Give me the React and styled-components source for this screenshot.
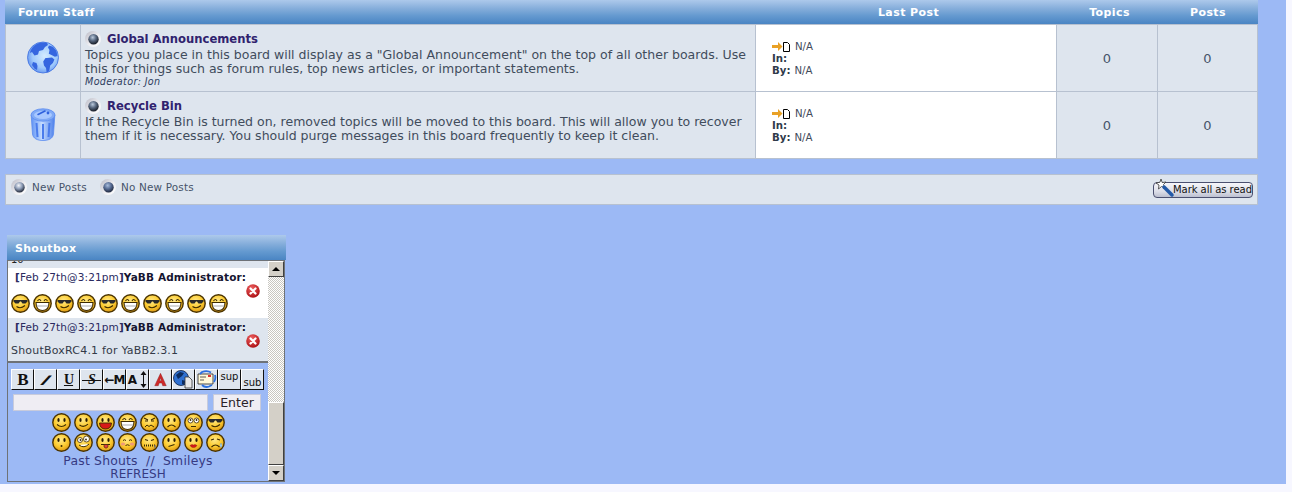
import React from "react";
import styled, { createGlobalStyle } from "styled-components";

const Global = createGlobalStyle`
  html, body { margin: 0; padding: 0; background: #f7f7ff; }
  body { font-family: "DejaVu Sans", Verdana, sans-serif; color: #3f4a5a; overflow: hidden; }
`;

const Page = styled.div`
  width: 1286px; height: 484px; background: #9cb9f5; overflow: hidden;
  display: flex; flex-direction: column; align-items: flex-start; padding-left: 5px; box-sizing: border-box;
`;
const HEADER_GRADIENT = "linear-gradient(#adc9eb 0%, #86aedb 35%, #659ad0 65%, #4a85c3 100%)";
const COLS = "75px 675px 301px 101px 1fr";
const Board = styled.section`width: 1253px; flex: none;`;
const HeadRow = styled.div`
  display: grid; grid-template-columns: ${COLS}; height: 24px; align-items: center;
  background: ${HEADER_GRADIENT};
  color: #fff; font-weight: bold; font-size: 11px;
`;
const HeadTitle = styled.div`grid-column: 1 / span 2; padding-left: 13px; letter-spacing: .3px;`;
const HeadCell = styled.div`text-align: center; padding-left: ${p => p.$shift || 0}px; letter-spacing: .4px;`;
const Row = styled.div`
  display: grid; grid-template-columns: ${COLS}; height: ${p => p.$h}px;
  border: 1px solid #b7c1d0; border-top: ${p => p.$first ? "1px solid #b7c1d0" : "0"}; box-sizing: border-box;
`;
const Cell = styled.div`
  background: ${p => p.$white ? "#fff" : "#dee5ee"};
  border-right: ${p => p.$last ? "0" : "1px solid #b7c1d0"};
  box-sizing: border-box; min-width: 0;
`;
const IconCell = styled(Cell)`display: flex; align-items: center; justify-content: center; padding-bottom: 1px;`;
const InfoCell = styled(Cell)`padding: 5px 0 0 4px;`;
const TitleLine = styled.div`display: flex; align-items: center; gap: 6px; height: 18px; padding-bottom: 1px; box-sizing: border-box;`;
const BoardTitle = styled.a`font-size: 11.6px; font-weight: bold; color: #30226e; white-space: nowrap;`;
const Desc = styled.div`font-size: 12.52px; line-height: 14px; white-space: nowrap; color: #414c5c;`;
const Mod = styled.div`font-size: 9.6px; font-style: italic; line-height: 12px; color: #2e3e5e; letter-spacing: .35px;`;
const LastCell = styled(Cell)`padding: 16px 0 0 16px; font-size: 10.2px; line-height: 12px;`;
const LastLine = styled.div`display: flex; align-items: center; gap: 4px; height: 12px;`;
const Strong = styled.b`color: #2f3a4a;`;
const CountCell = styled(Cell)`display: flex; align-items: center; justify-content: center; font-size: 13px; color: #46546a;`;

const Legend = styled.div`
  width: 1253px; height: 31px; flex: none; margin-top: 15px; box-sizing: border-box;
  background: #dee5ee; border: 1px solid #b7c1d0;
  display: flex; align-items: center; padding: 0 4px 0 5px; font-size: 10.4px; color: #46546a; letter-spacing: .2px;
`;
const LegendItem = styled.div`display: flex; align-items: center; gap: 5px; margin: 0 13px 6px 0;`;
const MarkButton = styled.button`
  position: relative; margin-left: auto; width: 100px; height: 16px; padding: 0 0 0 19px; box-sizing: border-box;
  border: 1px solid #4b5070; border-radius: 4px; background: linear-gradient(#f6f6fa, #dcdee8 60%, #bcc0d0);
  font: 10px/13px "DejaVu Sans", sans-serif; color: #111; white-space: nowrap; text-align: left; letter-spacing: -.05px;
`;
const Wand = styled.svg`position: absolute; left: 2px; top: -4px;`;

const Shout = styled.section`width: 279px; flex: none; margin: 30px 0 0 2px;`;
const ShoutHead = styled.div`
  height: 25px; box-sizing: border-box; background: ${HEADER_GRADIENT}; color: #fff; font-weight: bold; font-size: 11px;
  display: flex; align-items: center; padding: 1px 0 0 8px; letter-spacing: .3px;
`;
const Frame = styled.div`
  width: 278px; height: 222px; box-sizing: border-box; border: 1px solid #6e7277;
  display: grid; grid-template-columns: 260px 16px; grid-template-rows: 220px;
`;
const Main = styled.div`display: flex; flex-direction: column; min-width: 0; min-height: 0;`;
const Feed = styled.div`border-bottom: 2px solid #6e7277; background: #dee5ee;`;
const Clip = styled.div`
  height: 7px; overflow: hidden; display: flex; align-items: flex-end; padding: 0 0 2px 3px; box-sizing: border-box;
  font-size: 10px; line-height: 12px; color: #222;
`;
const Post = styled.div`
  position: relative; height: ${p => p.$h}px; box-sizing: border-box; padding: 3px 0 0 3px;
  background: ${p => p.$white ? "#fff" : "#dee5ee"}; font-size: 10.5px; line-height: 12px; color: #2a2a60;
`;
const PostHead = styled.div`padding-left: 4px; white-space: nowrap; letter-spacing: .13px;`;
const Name = styled.b`color: #151530;`;
const Delete = styled.svg`position: absolute; right: 8px; top: 16px;`;
const PostSmileys = styled.div`display: flex; gap: 3px; margin-top: 11px;`;
const PostText = styled.div`margin-top: 12px; color: #333a48; white-space: nowrap; font-size: 11px; letter-spacing: .2px;`;

const Form = styled.form`flex: 1; background: #9cb9f5; padding: 6px 3px 0; display: flex; flex-direction: column; margin: 0; min-height: 0;`;
const Toolbar = styled.div`display: flex; height: 21px; flex: none;`;
const Tool = styled.div`
  width: 23px; height: 21px; box-sizing: border-box; flex: none; background: #dee5ee; overflow: hidden;
  border-top: 1px solid #fff; border-left: 1px solid #fff; border-right: 1px solid #111; border-bottom: 1px solid #111;
  display: flex; align-items: ${p => p.$align || "center"}; justify-content: center; color: #111;
  font: bold 12px/1 "DejaVu Sans", sans-serif; letter-spacing: -1px;
`;
const SerifB = styled.span`font: bold 17px/1 "Liberation Serif", serif;`;
const SlantI = styled.span`font: bold 14px/1 "Liberation Sans", sans-serif; display: block; transform: skewX(-42deg) scaleX(1.5);`;
const UnderU = styled.span`font: bold 14px/1 "Liberation Serif", serif; text-decoration: underline;`;
const StrikeS = styled.span`font: italic bold 14px/1 "Liberation Serif", serif; position: relative; &::after { content: ""; position: absolute; left: -6px; right: -6px; top: 7px; height: 1px; background: #111; }`;
const Small = styled.span`font: 10px/1 "DejaVu Sans", sans-serif; letter-spacing: 0; padding: ${p => p.$pad};`;
const Entry = styled.div`display: flex; gap: 5px; padding: 4px 0 0 2px; flex: none;`;
const Input = styled.input`
  width: 195px; height: 17px; box-sizing: border-box; border: 1px solid #c8cbdc; background: #efedf3; padding: 0;
`;
const Enter = styled.button`
  width: 48px; height: 17px; box-sizing: border-box; border: 1px solid #c8cbdc; background: #efedf3; padding: 0;
  font: 12.5px/15px "DejaVu Sans", sans-serif; color: #2a2228;
`;
const SmileRow = styled.div`display: flex; justify-content: center; gap: 3px; height: 19px; margin-top: ${p => p.$mt}px; flex: none;`;
const Links = styled.div`
  text-align: center; font-size: ${p => p.$size}px; line-height: ${p => p.$lh}px; color: #363a82; white-space: pre; flex: none;
  margin-top: ${p => p.$mt || 0}px; letter-spacing: ${p => p.$ls || 0}px;
`;

const Bar = styled.div`display: flex; flex-direction: column; background-color: #fff; background-image: conic-gradient(#c9c7c1 25%, transparent 0 50%, #c9c7c1 0 75%, transparent 0); background-size: 2px 2px;`;
const Arrow = styled.div`
  width: 16px; height: 16px; box-sizing: border-box; flex: none; background: #d4d0c8;
  border: 1px solid; border-color: #fff #404040 #404040 #fff; display: flex; align-items: center; justify-content: center;
`;
const Tri = styled.span`
  width: 0; height: 0; border-left: 4px solid transparent; border-right: 4px solid transparent;
  ${p => p.$down ? "border-top: 4px solid #000;" : "border-bottom: 4px solid #000;"}
`;
const Thumb = styled.div`
  height: 63px; margin-top: auto; box-sizing: border-box; background: #d4d0c8;
  border: 1px solid; border-color: #fff #404040 #404040 #fff;
`;
const DefsSvg = styled.svg`position: absolute; width: 0; height: 0;`;

const Defs = () => (
  <DefsSvg aria-hidden="true">
    <defs>
      <radialGradient id="face" cx="45%" cy="35%" r="70%"><stop offset="0" stopColor="#ffe98a"/><stop offset=".55" stopColor="#fccb30"/><stop offset="1" stopColor="#d78f10"/></radialGradient>
      <linearGradient id="led" x1="0" y1="0" x2="1" y2="1"><stop offset="0" stopColor="#b9b9c4"/><stop offset=".55" stopColor="#eeeef2"/><stop offset="1" stopColor="#fff"/></linearGradient>
      <radialGradient id="ball" cx="42%" cy="32%" r="70%"><stop offset="0" stopColor="#bccadc"/><stop offset=".45" stopColor="#5c6c84"/><stop offset="1" stopColor="#12161f"/></radialGradient>
      <radialGradient id="ballNew" cx="42%" cy="32%" r="70%"><stop offset="0" stopColor="#f6f8fc"/><stop offset=".5" stopColor="#8a99b4"/><stop offset="1" stopColor="#1c2230"/></radialGradient>
      <radialGradient id="ballOld" cx="42%" cy="32%" r="70%"><stop offset="0" stopColor="#a8bcdc"/><stop offset=".5" stopColor="#566a92"/><stop offset="1" stopColor="#1c2438"/></radialGradient>
      <radialGradient id="sea" cx="55%" cy="45%" r="60%"><stop offset="0" stopColor="#d3ebff"/><stop offset=".65" stopColor="#a0cafc"/><stop offset="1" stopColor="#5f90ee"/></radialGradient>
      <linearGradient id="bin" x1="0" x2="1" y1="0" y2="0"><stop offset="0" stopColor="#5f92f4"/><stop offset=".45" stopColor="#c5dcff"/><stop offset="1" stopColor="#4a7eea"/></linearGradient>
      <radialGradient id="red" cx="40%" cy="30%" r="75%"><stop offset="0" stopColor="#f06060"/><stop offset="1" stopColor="#a80c10"/></radialGradient>
    </defs>
  </DefsSvg>
);

const Led = ({ fill = "ball" }) => (
  <svg width="16" height="16" viewBox="0 0 16 16" style={{ flex: "none" }}>
    <circle cx="8" cy="8" r="8" fill="url(#led)"/>
    <circle cx="8.500" cy="8.300" r="5.200" fill={`url(#${fill})`}/>
  </svg>
);

const Globe = () => (
  <svg width="32" height="33" viewBox="0 0 32 33">
    <circle cx="16" cy="16.500" r="15.500" fill="url(#sea)" stroke="#3f70e0" strokeWidth=".8"/>
    <path fill="#3566e0" d="M9 3.500c3-2 8-2.500 11-1.500l1 2-3 2-2 3-4 1-1 3.500-3.500 1L5 11 2.800 12C3.500 8.500 6 5 9 3.500z"/>
    <path fill="#3566e0" d="M20 17l5-.6 2.400 2-1.500 3.600-2.700 2.500-1 5.500-2.500 1.800-.7-4.800-2-2.600-.8-3.900 2.300-3.500z"/>
    <path fill="#3566e0" d="M22 4.500l4 1.200 3.500 4.300.9 5-2.500.8-2.400-1.300-3.700-1.700.7-3.800-1.500-2.500z"/>
    <path fill="#3566e0" d="M6 21l3.500 1 1 3-.5 4-2.500-1.500L5 24z"/>
  </svg>
);

const Bin = () => (
  <svg width="26" height="33" viewBox="0 0 26 33">
    <path fill="url(#bin)" stroke="#5a8cf0" strokeWidth=".8" d="M1.200 7l1.300 19c.5 4.500 5 6.500 10.500 6.500S23 30.500 23.500 26l1.300-19z"/>
    <ellipse cx="13" cy="7" rx="12" ry="6.200" fill="#80aaf6" stroke="#5a8cf0" strokeWidth=".8"/>
    <ellipse cx="13" cy="7" rx="9" ry="4" fill="#a8c8ff"/>
    <path stroke="#2f62de" strokeWidth="1.600" strokeLinecap="round" d="M8 6.500l7-3.500"/>
    <circle cx="18" cy="5" r="1.400" fill="#2f62de"/>
    <path stroke="#4a7cec" strokeWidth="2" fill="none" d="M6.500 15l1 14M13 16v15M19.500 15l-1 14"/>
  </svg>
);

const PostIcon = () => (
  <svg width="19" height="10" viewBox="0 0 19 10" style={{ flex: "none" }}>
    <path fill="#e9a126" d="M0 3h6V0l4.500 4.500L6 9V6H0z"/>
    <path fill="#fff" stroke="#000" d="M11.500.5h4l2 2v7h-6z"/>
  </svg>
);

const DeleteIcon = () => (
  <Delete width="14" height="14" viewBox="0 0 14 14">
    <circle cx="7" cy="7" r="6.800" fill="url(#red)"/>
    <path stroke="#fff" strokeWidth="2.200" strokeLinecap="round" d="M4.500 4.500l5 5M9.500 4.500l-5 5"/>
  </Delete>
);

const eyes = <g fill="#2a1c00"><ellipse cx="6.500" cy="7" rx="1.100" ry="1.900"/><ellipse cx="12.500" cy="7" rx="1.100" ry="1.900"/></g>;
const L = "#3d2a00";
const faces = {
  smile: <>{eyes}<path d="M5 11.500q4.500 4 9 0" fill="none" stroke={L} strokeWidth="1.100"/></>,
  wink: <>{eyes}<path d="M5.500 12q4 3 8.500-.8" fill="none" stroke={L} strokeWidth="1.100"/></>,
  grin: <>{eyes}<path d="M3.500 10h12q-.5 6-6 6t-6-6z" fill="#d81818" stroke={L} strokeWidth=".9"/></>,
  laugh: <><path d="M4.500 7q2-3 3.500 0M11 7q1.500-3 3.500 0" fill="none" stroke={L} strokeWidth="1.100"/><path d="M3 8.500h13q0 8-6.500 8t-6.500-8z" fill="#fff" stroke={L} strokeWidth="1.100"/><path d="M3.500 12h12" stroke="#888" strokeWidth=".7"/></>,
  angry: <><path d="M4 5l4 2M15 5l-4 2M5 8h3M11 8h3" stroke={L} strokeWidth="1.200"/><path d="M5 14l2-2 2 1.500 2-1.500 3 2" fill="none" stroke={L} strokeWidth="1"/></>,
  sad: <>{eyes}<path d="M5.500 14q4-4 8 0" fill="none" stroke={L} strokeWidth="1.100"/></>,
  roll: <><circle cx="6.500" cy="7.500" r="2.500" fill="#fff" stroke={L} strokeWidth=".8"/><circle cx="12.500" cy="7.500" r="2.500" fill="#fff" stroke={L} strokeWidth=".8"/><circle cx="6.500" cy="7" r=".9" fill={L}/><circle cx="12.500" cy="7" r=".9" fill={L}/><path d="M7 13.500h5" stroke={L} strokeWidth="1"/></>,
  cool: <><path d="M2.500 6h14v1.500l-2 2h-3l-1.500-2h-1l-1.500 2H4.500l-2-2z" fill="#2a2a2a"/><path d="M5.500 12.500q4 3 8.500-1" fill="none" stroke={L} strokeWidth="1.100"/></>,
  shock: <>{eyes}<circle cx="9.500" cy="13" r="1" fill={L}/></>,
  crazy: <><circle cx="6" cy="7" r="2.500" fill="#fff" stroke={L} strokeWidth=".8"/><circle cx="12.500" cy="6" r="3" fill="#fff" stroke={L} strokeWidth=".8"/><circle cx="6.500" cy="7" r=".9" fill={L}/><circle cx="12" cy="6.500" r=".9" fill={L}/><path d="M5 12q5 4 10-1" fill="#fff" stroke={L} strokeWidth="1"/></>,
  tongue: <>{eyes}<path d="M5 11.500h9" stroke={L} strokeWidth="1"/><path d="M8 11.500h4v2.500q-2 2.500-4 0z" fill="#e04040" stroke={L} strokeWidth=".6"/></>,
  blush: <><path d="M5 7.500q1.500-1.500 3 0M11 7.500q1.500-1.500 3 0" fill="none" stroke={L} strokeWidth="1"/><ellipse cx="5" cy="11" rx="2.200" ry="1.500" fill="#ef9a7a"/><ellipse cx="14" cy="11" rx="2.200" ry="1.500" fill="#ef9a7a"/><path d="M7.500 12.500q2-1.500 4 0" fill="none" stroke={L}/></>,
  zip: <><path d="M5 6.500l3 1M14 6.500l-3 1" stroke={L} strokeWidth="1.200"/><path d="M4 12.500h11" stroke={L} strokeWidth="1.800" strokeDasharray="1 1"/><path d="M15 12v3" stroke="#777" strokeWidth="1.200"/></>,
  unsure: <>{eyes}<path d="M6.500 13.500l6-2" stroke={L} strokeWidth="1.100"/></>,
  kiss: <>{eyes}<path d="M6 12.500q2-1.500 3.500-.5 1.500-1 3.500.5-1.500 2.500-3.500 2-2 .5-3.500-2z" fill="#d81818" stroke="#801010" strokeWidth=".4"/></>,
  cry: <><path d="M5 7l3-1M14 7l-3-1" stroke={L} strokeWidth="1.100"/><path d="M5.500 14q4-4 8 0" fill="none" stroke={L} strokeWidth="1.100"/><path d="M15 10q2 3 0 4.500-2-1.500 0-4.500z" fill="#a8d8f8" stroke="#5a90c0" strokeWidth=".4"/></>,
};
const Smiley = ({ kind }) => (
  <svg width="19" height="19" viewBox="0 0 19 19" style={{ flex: "none" }}>
    <circle cx="9.500" cy="9.500" r="8.700" fill="url(#face)" stroke="#4a3300" strokeWidth="1.400"/>
    {faces[kind]}
  </svg>
);

const Tools = () => (
  <Toolbar>
    <Tool><SerifB>B</SerifB></Tool>
    <Tool><SlantI>I</SlantI></Tool>
    <Tool><UnderU>U</UnderU></Tool>
    <Tool><StrikeS>S</StrikeS></Tool>
    <Tool>←M</Tool>
    <Tool>
      A
      <svg width="7" height="17" viewBox="0 0 7 17" style={{ marginLeft: 4 }}><path d="M3.500 0L6.500 4H.5zM3.500 17L.5 13h6zM3 3h1v11H3z" fill="#111"/></svg>
    </Tool>
    <Tool>
      <svg width="15" height="15" viewBox="0 0 17 16"><path d="M8.500 1L15 15h-4l-1-3H7l-1 3H2zM8.500 6L7.500 9.500h2z" fill="#cf2a2a" stroke="#8a1c1c" strokeWidth=".5"/></svg>
    </Tool>
    <Tool>
      <svg width="21" height="19" viewBox="0 0 21 19">
        <circle cx="8" cy="8" r="7.500" fill="#2f70d0" stroke="#102040" strokeWidth=".8"/>
        <path d="M3 5l4-3 4 1-2 3-4 3zM9 10l4 1-2 4-2-1z" fill="#0c2c60"/>
        <path d="M12 7h4l3 3v8h-7z" fill="#e8e8e8" stroke="#333" strokeWidth=".8"/>
      </svg>
    </Tool>
    <Tool>
      <svg width="21" height="19" viewBox="0 0 21 19">
        <path d="M2 4h15v10H2z" fill="#fff8d8" stroke="#222" strokeWidth=".8"/>
        <path d="M12 5h3v2h-3z" fill="#e03030"/>
        <path d="M4 7h6M4 10h4" stroke="#333" strokeWidth=".8"/>
        <path d="M6 15q3 3 7 1.500l3-1.500" fill="none" stroke="#2a70e0" strokeWidth="1.800"/>
        <path d="M15 2.500Q11 0 6 2L4 4M19 5q1 4-1 7" fill="none" stroke="#2a70e0" strokeWidth="1.800"/>
      </svg>
    </Tool>
    <Tool $align="flex-start"><Small $pad="2px 0 0">sup</Small></Tool>
    <Tool $align="flex-end"><Small $pad="0 0 1px">sub</Small></Tool>
  </Toolbar>
);

const Rows = [
  {
    h: 68, first: true, icon: <Globe />, title: "Global Announcements",
    lines: ['Topics you place in this board will display as a "Global Announcement" on the top of all other boards. Use', "this for things such as forum rules, top news articles, or important statements."],
    mod: true,
  },
  {
    h: 67, icon: <Bin />, title: "Recycle Bin",
    lines: ["If the Recycle Bin is turned on, removed topics will be moved to this board. This will allow you to recover", "them if it is necessary. You should purge messages in this board frequently to keep it clean."],
  },
];

const row1 = ["smile", "wink", "grin", "laugh", "angry", "sad", "roll", "cool"];
const row2 = ["shock", "crazy", "tongue", "blush", "zip", "unsure", "kiss", "cry"];
const postFaces = ["cool", "laugh", "cool", "laugh", "cool", "laugh", "cool", "laugh", "cool", "laugh"];

const PostHeader = () => (
  <PostHead><b>[</b>Feb 27th@3:21pm<b>]</b><Name>YaBB Administrator:</Name></PostHead>
);

export default function App() {
  return (
    <Page>
      <Global />
      <Defs />
      <Board>
        <HeadRow>
          <HeadTitle>Forum Staff</HeadTitle>
          <HeadCell $shift={6}>Last Post</HeadCell>
          <HeadCell $shift={6}>Topics</HeadCell>
          <HeadCell $shift={1}>Posts</HeadCell>
        </HeadRow>
        {Rows.map(r => (
          <Row key={r.title} $h={r.h} $first={r.first}>
            <IconCell>{r.icon}</IconCell>
            <InfoCell>
              <TitleLine><Led /><BoardTitle>{r.title}</BoardTitle></TitleLine>
              {r.lines.map(l => <Desc key={l}>{l}</Desc>)}
              {r.mod && <Mod>Moderator: Jon</Mod>}
            </InfoCell>
            <LastCell $white>
              <LastLine><PostIcon /><span>N/A</span></LastLine>
              <LastLine><Strong>In:</Strong></LastLine>
              <LastLine><Strong>By:</Strong><span>N/A</span></LastLine>
            </LastCell>
            <CountCell>0</CountCell>
            <CountCell $last>0</CountCell>
          </Row>
        ))}
      </Board>
      <Legend>
        <LegendItem><Led fill="ballNew" /><span>New Posts</span></LegendItem>
        <LegendItem><Led fill="ballOld" /><span>No New Posts</span></LegendItem>
        <MarkButton type="button">
          <Wand width="20" height="19" viewBox="0 0 20 19">
            <path d="M5 0l1.200 3.500L10 3 7.500 5.500 9 9 5.500 7.500 2.500 10l.5-4L0 4l4-.8z" fill="#fff" stroke="#333" strokeWidth=".8"/>
            <path d="M8 8l8 8" stroke="#245aa8" strokeWidth="3.500" strokeLinecap="round"/>
          </Wand>
          Mark all as read
        </MarkButton>
      </Legend>
      <Shout>
        <ShoutHead>Shoutbox</ShoutHead>
        <Frame>
          <Main>
            <Feed>
              <Clip>10</Clip>
              <Post $h={50} $white>
                <PostHeader />
                <DeleteIcon />
                <PostSmileys>{postFaces.map((f, i) => <Smiley key={i} kind={f} />)}</PostSmileys>
              </Post>
              <Post $h={43}>
                <PostHeader />
                <DeleteIcon />
                <PostText>ShoutBoxRC4.1 for YaBB2.3.1</PostText>
              </Post>
            </Feed>
            <Form onSubmit={e => e.preventDefault()}>
              <Tools />
              <Entry><Input /><Enter type="button">Enter</Enter></Entry>
              <SmileRow $mt={2}>{row1.map(f => <Smiley key={f} kind={f} />)}</SmileRow>
              <SmileRow $mt={1}>{row2.map(f => <Smiley key={f} kind={f} />)}</SmileRow>
              <Links $mt={2} $lh={14} $size={12.4} $ls={0.2}>{"Past Shouts  //  Smileys"}</Links>
              <Links $lh={13} $size={12}>REFRESH</Links>
            </Form>
          </Main>
          <Bar>
            <Arrow><Tri /></Arrow>
            <Thumb />
            <Arrow><Tri $down /></Arrow>
          </Bar>
        </Frame>
      </Shout>
    </Page>
  );
}
